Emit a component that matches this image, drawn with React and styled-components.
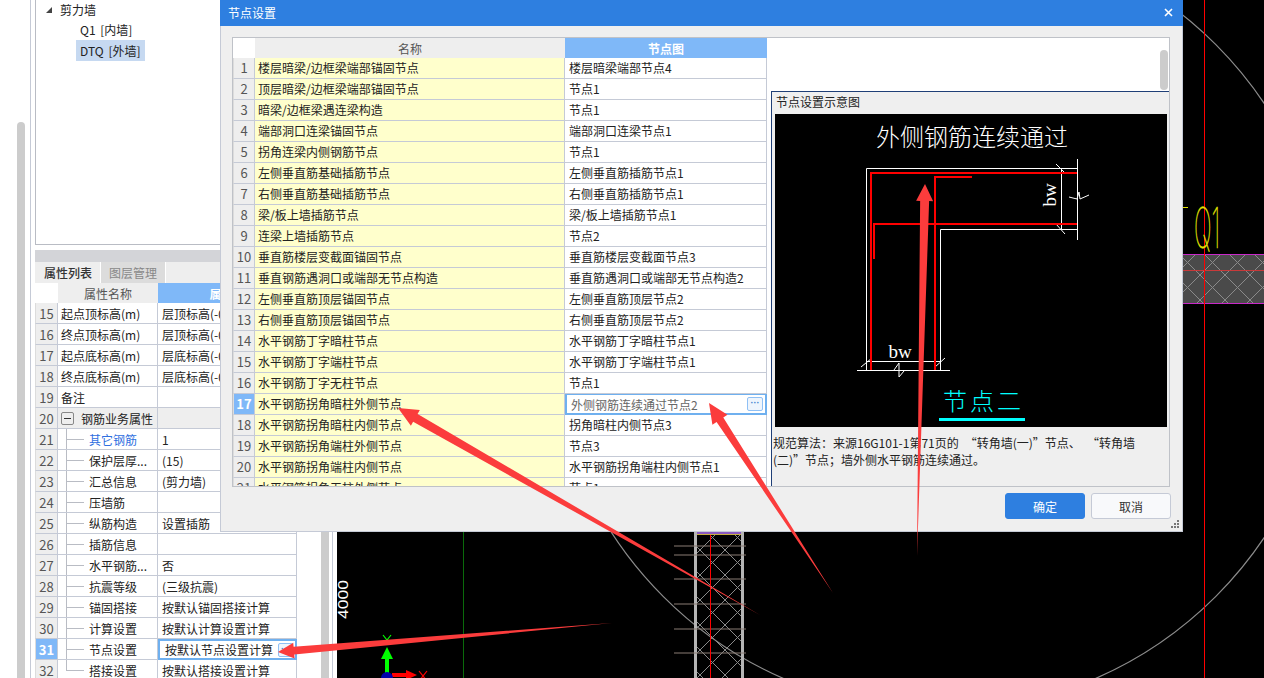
import React from "react";
import styled, { createGlobalStyle } from "styled-components";

const GlobalStyle = createGlobalStyle`
  html, body {
    margin: 0;
    padding: 0;
    overflow: hidden;
    background: #000;
  }
  #root {
    width: 1264px;
    height: 678px;
  }
`;

const FONT = `"Noto Sans CJK SC", "Liberation Sans", sans-serif`;
const LINE = "#c5cad6";

const Page = styled.div`
  position: relative;
  display: flex;
  width: 1264px;
  height: 678px;
  overflow: hidden;
  font-family: ${FONT};
  font-size: 12px;
  color: #222;
`;

/* left side */
const Sidebar = styled.div`
  display: flex;
  flex: 0 0 337px;
  background: #fff;
`;

const OuterRail = styled.div`
  flex: 0 0 31px;
  padding: 122px 0 0 17px;
  box-sizing: border-box;
  border-right: 1px solid ${LINE};
`;

const Thumb = styled.div`
  width: 8px;
  height: 100%;
  background: #ccc;
  border-radius: 4px 4px 0 0;
`;

const Panel = styled.div`
  flex: 0 0 262px;
  margin-left: 4px;
  display: flex;
  flex-direction: column;
`;

const TreeBox = styled.div`
  height: 245px;
  box-sizing: border-box;
  border-left: 1px solid #b9bcc4;
  border-bottom: 1px solid #b9bcc4;
  margin-bottom: 5px;
  flex: none;
`;

const TreeRow = styled.div`
  display: flex;
  align-items: center;
  height: ${(p) => p.$h || 21}px;
  padding-left: ${(p) => p.$indent}px;
`;

const Caret = styled.span`
  width: 0;
  height: 0;
  margin-right: 4px;
  border-style: solid;
  border-width: 0 0 6px 6px;
  border-color: transparent transparent #444 transparent;
`;

const TreeLabel = styled.span`
  padding: 0 4px;
  line-height: 21px;
  word-spacing: 2px;
  background: ${(p) => (p.$active ? "#c6d9f1" : "transparent")};
`;

const GreyBar = styled.div`
  flex: none;
  height: 12px;
  background: #d3d4d8;
`;

const Tabs = styled.div`
  flex: none;
  display: flex;
  height: 21px;
  padding-left: 1px;
  background: #eee;
`;

const Tab = styled.div`
  width: 65px;
  display: flex;
  align-items: center;
  justify-content: center;
  font-weight: ${(p) => (p.$active ? 500 : 400)};
  background: ${(p) => (p.$active ? "#eee" : "#dcdcdc")};
  color: ${(p) => (p.$active ? "#333" : "#888")};
  border-right: 1px solid #fff;
  box-sizing: border-box;
`;

const PropHead = styled.div`
  flex: none;
  display: grid;
  grid-template-columns: 23px 100px 139px;
  height: 20px;
`;

const HeadCell = styled.div`
  display: flex;
  align-items: center;
  justify-content: center;
  overflow: hidden;
  white-space: nowrap;
  font-weight: ${(p) => (p.$active ? 700 : 400)};
  background: ${(p) => (p.$blank ? "#fff" : p.$active ? "#7fb8f8" : "#eee")};
  color: ${(p) => (p.$active ? "#fff" : "#555")};
`;

const PropRow = styled.div`
  flex: none;
  display: grid;
  grid-template-columns: 23px 100px 139px;
  height: 21px;
`;

const Cell = styled.div`
  position: relative;
  display: flex;
  align-items: center;
  box-sizing: border-box;
  white-space: nowrap;
  overflow: hidden;
  border-right: 1px solid ${LINE};
  border-bottom: 1px solid ${LINE};
`;

const IndexCell = styled(Cell)`
  justify-content: center;
  font-size: 13px;
  color: ${(p) => (p.$active ? "#fff" : "#555")};
  font-weight: ${(p) => (p.$active ? 700 : 400)};
  background: ${(p) => (p.$active ? "#7fb8f8" : "#eee")};
  border-left: 1px solid #dcdcdc;
`;

const NameCell = styled(Cell)`
  padding-left: ${(p) => (p.$child ? 31 : 3)}px;
  background: ${(p) => (p.$group ? "#eee" : "#fff")};
  color: ${(p) => (p.$link ? "#2f6fe0" : "#222")};
  &::before {
    content: ${(p) => (p.$child ? '""' : "none")};
    position: absolute;
    left: 8px;
    top: -1px;
    bottom: ${(p) => (p.$last ? "10px" : "-1px")};
    border-left: 1px solid #b9bcc4;
  }
  &::after {
    content: ${(p) => (p.$child ? '""' : "none")};
    position: absolute;
    left: 8px;
    top: 10px;
    width: 18px;
    border-top: 1px solid #b9bcc4;
  }
`;

const ValueCell = styled(Cell)`
  padding-left: 4px;
  background: ${(p) => (p.$group ? "#eee" : "#fff")};
`;

const EditingProp = styled.div`
  position: relative;
  display: flex;
  align-items: center;
  justify-content: space-between;
  box-sizing: border-box;
  padding: 0 2px 0 5px;
  white-space: nowrap;
  overflow: hidden;
  border: 2px solid #6fb0ef;
`;

const Expander = styled.span`
  flex: none;
  width: 13px;
  height: 13px;
  margin-right: 7px;
  box-sizing: border-box;
  border: 1px solid #888;
  border-radius: 2px;
  display: flex;
  align-items: center;
  justify-content: center;
  &::before {
    content: "";
    width: 7px;
    border-top: 1px solid #333;
  }
`;

const RightRail = styled.div`
  flex: 1;
  display: flex;
  align-items: stretch;
  padding-left: 24px;
`;

const RailThumb = styled.div`
  flex: 0 0 8px;
  background: #ccc;
`;

const RailLine = styled.div`
  flex: 0 0 1px;
  margin-left: 3px;
  background: ${LINE};
`;

/* cad canvas */
const Canvas = styled.svg`
  flex: 1;
  display: block;
  height: 678px;
  background: #000;
`;

/* dialog window */
const Dialog = styled.div`
  position: absolute;
  left: 220px;
  top: 0;
  width: 963px;
  height: 532px;
  display: flex;
  flex-direction: column;
  box-sizing: border-box;
  background: #efefef;
  border: 1px solid ${LINE};
  border-top: 0;
`;

const TitleBar = styled.div`
  flex: none;
  height: 26px;
  margin: 0 -1px;
  padding: 0 8px 2px;
  box-sizing: border-box;
  display: flex;
  align-items: center;
  justify-content: space-between;
  background: #2e7fe0;
  color: #fff;
`;

const CloseIcon = styled.svg`
  width: 9px;
  height: 9px;
  margin-right: 2px;
`;

const Grid = styled.div`
  position: relative;
  flex: none;
  margin: 11px 0 0 11px;
  width: 938px;
  height: 450px;
  box-sizing: border-box;
  border: 1px solid #bfc2c8;
  background: #fff;
  overflow: hidden;
`;

const GridHead = styled.div`
  display: grid;
  grid-template-columns: 22px 310px 202px;
  height: 20px;
`;

const GridRow = styled.div`
  display: grid;
  grid-template-columns: 22px 310px 202px;
  height: 21px;
`;

const GridIndex = styled(IndexCell)`
  padding-bottom: 1px;
`;

const GridName = styled(Cell)`
  padding: 0 0 1px 3px;
  background: #ffffcc;
`;

const GridValue = styled(Cell)`
  padding: 0 0 1px 4px;
  background: #fff;
`;

const EditingValue = styled.div`
  display: flex;
  align-items: center;
  justify-content: space-between;
  box-sizing: border-box;
  margin-top: -1px;
  height: 22px;
  padding: 0 2px 0 4px;
  color: #666;
  border: 2px solid #6fb0ef;
  background: #fff;
`;

const DotsButton = styled.span`
  flex: none;
  width: ${(p) => p.$w}px;
  height: 14px;
  box-sizing: border-box;
  border: 1px solid #8fc0f5;
  border-radius: 2px;
  background: #eef5fd;
  color: #3f7fd0;
  font: 700 9px/10px "Liberation Sans", sans-serif;
  text-align: center;
`;

const ScrollThumb = styled.div`
  position: absolute;
  right: 1px;
  top: 12px;
  width: 8px;
  height: 40px;
  background: #ccc;
  border-radius: 4px;
`;

const PreviewPanel = styled.div`
  position: absolute;
  left: 538px;
  top: 53px;
  width: 399px;
  height: 396px;
  box-sizing: border-box;
  display: flex;
  flex-direction: column;
  padding: 0 3px;
  background: #efefef;
  border: 1px solid #1f3f77;
`;

const PreviewTitle = styled.div`
  flex: none;
  height: 22px;
  box-sizing: border-box;
  display: flex;
  align-items: center;
  padding: 0 0 4px 1px;
`;

const Diagram = styled.svg`
  flex: none;
  display: block;
  width: 392px;
  height: 313px;
  background: #000;
`;

const RuleText = styled.div`
  margin: 7px 0 0 -2px;
  line-height: 17px;
  white-space: nowrap;
  color: #222;
`;

const Footer = styled.div`
  flex: 1;
  display: flex;
  justify-content: flex-end;
  align-items: flex-start;
  gap: 6px;
  padding: 6px 11px 0 0;
`;

const Button = styled.div`
  width: 80px;
  height: 26px;
  box-sizing: border-box;
  display: flex;
  align-items: center;
  justify-content: center;
  border-radius: 3px;
  background: ${(p) => (p.$primary ? "#2e7fe0" : "#f8f9fb")};
  color: ${(p) => (p.$primary ? "#fff" : "#333")};
  border: 1px solid ${(p) => (p.$primary ? "#2e7fe0" : LINE)};
`;

const Grip = styled.svg`
  position: absolute;
  right: 2px;
  bottom: 2px;
  width: 9px;
  height: 9px;
`;

const Overlay = styled.svg`
  position: absolute;
  left: 0;
  top: 0;
  width: 1264px;
  height: 678px;
  pointer-events: none;
`;

const props = [
  { n: 15, name: "起点顶标高(m)", value: "层顶标高(-0" },
  { n: 16, name: "终点顶标高(m)", value: "层顶标高(-0" },
  { n: 17, name: "起点底标高(m)", value: "层底标高(-0" },
  { n: 18, name: "终点底标高(m)", value: "层底标高(-0" },
  { n: 19, name: "备注", value: "" },
  { n: 20, name: "钢筋业务属性", value: "", group: true },
  { n: 21, name: "其它钢筋", value: "1", child: true, link: true },
  { n: 22, name: "保护层厚...", value: "(15)", child: true },
  { n: 23, name: "汇总信息", value: "(剪力墙)", child: true },
  { n: 24, name: "压墙筋", value: "", child: true },
  { n: 25, name: "纵筋构造", value: "设置插筋", child: true },
  { n: 26, name: "插筋信息", value: "", child: true },
  { n: 27, name: "水平钢筋...", value: "否", child: true },
  { n: 28, name: "抗震等级", value: "(三级抗震)", child: true },
  { n: 29, name: "锚固搭接", value: "按默认锚固搭接计算", child: true },
  { n: 30, name: "计算设置", value: "按默认计算设置计算", child: true },
  { n: 31, name: "节点设置", value: "按默认节点设置计算", child: true, editing: true },
  { n: 32, name: "搭接设置", value: "按默认搭接设置计算", child: true, last: true },
];

const nodes = [
  ["楼层暗梁/边框梁端部锚固节点", "楼层暗梁端部节点4"],
  ["顶层暗梁/边框梁端部锚固节点", "节点1"],
  ["暗梁/边框梁遇连梁构造", "节点1"],
  ["端部洞口连梁锚固节点", "端部洞口连梁节点1"],
  ["拐角连梁内侧钢筋节点", "节点1"],
  ["左侧垂直筋基础插筋节点", "左侧垂直筋插筋节点1"],
  ["右侧垂直筋基础插筋节点", "右侧垂直筋插筋节点1"],
  ["梁/板上墙插筋节点", "梁/板上墙插筋节点1"],
  ["连梁上墙插筋节点", "节点2"],
  ["垂直筋楼层变截面锚固节点", "垂直筋楼层变截面节点3"],
  ["垂直钢筋遇洞口或端部无节点构造", "垂直筋遇洞口或端部无节点构造2"],
  ["左侧垂直筋顶层锚固节点", "左侧垂直筋顶层节点2"],
  ["右侧垂直筋顶层锚固节点", "右侧垂直筋顶层节点2"],
  ["水平钢筋丁字暗柱节点", "水平钢筋丁字暗柱节点1"],
  ["水平钢筋丁字端柱节点", "水平钢筋丁字端柱节点1"],
  ["水平钢筋丁字无柱节点", "节点1"],
  ["水平钢筋拐角暗柱外侧节点", "外侧钢筋连续通过节点2"],
  ["水平钢筋拐角暗柱内侧节点", "拐角暗柱内侧节点3"],
  ["水平钢筋拐角端柱外侧节点", "节点3"],
  ["水平钢筋拐角端柱内侧节点", "水平钢筋拐角端柱内侧节点1"],
  ["水平钢筋拐角无柱外侧节点", "节点1"],
];

// tapered annotation arrow, thin at the tail and widest behind the head
function arrowPoints([tx, ty], [hx, hy], headLen, headW, shaftW) {
  const len = Math.hypot(hx - tx, hy - ty);
  const ux = (hx - tx) / len;
  const uy = (hy - ty) / len;
  const bx = hx - ux * headLen;
  const by = hy - uy * headLen;
  const side = (d) => `${bx - uy * d},${by + ux * d}`;
  return [
    `${tx},${ty}`,
    side(shaftW / 2),
    side(headW / 2),
    `${hx},${hy}`,
    side(-headW / 2),
    side(-shaftW / 2),
  ].join(" ");
}

const arrows = [
  { tail: [760, 615], tip: [398, 408], head: 20, w: 18, shaft: 9 },
  { tail: [833, 593], tip: [709, 403], head: 20, w: 18, shaft: 8 },
  { tail: [917, 556], tip: [925, 184], head: 17, w: 17, shaft: 9 },
  { tail: [612, 623], tip: [278, 652], head: 16, w: 16, shaft: 8 },
];

function CadCanvas() {
  const levels = [546, 555, 579, 604, 629, 653];
  return (
    <Canvas viewBox="337 0 927 678">
      <defs>
        <pattern id="hatch" width="25" height="25" patternUnits="userSpaceOnUse">
          <path d="M0 0L25 25M25 0L0 25" stroke="#8a8a8a" strokeWidth="1" fill="none" />
        </pattern>
      </defs>
      <circle cx="939.5" cy="320.5" r="390.5" fill="none" stroke="#8c8c8c" strokeWidth="1.2" />
      <line x1="463.5" y1="0" x2="463.5" y2="678" stroke="#0a6a0a" />

      <rect x="694" y="531" width="50" height="147" fill="url(#hatch)" />
      <rect x="695.5" y="530" width="47" height="160" fill="none" stroke="#b5b5b5" strokeWidth="3" />
      <rect x="697" y="532" width="44" height="2" fill="#8a5ac0" />
      <rect x="697" y="534" width="44" height="1" fill="#c8b040" />
      {levels.map((y) => (
        <line key={y} x1="674" y1={y} x2="746" y2={y} stroke="#8a7c74" />
      ))}
      <line x1="710.5" y1="535" x2="710.5" y2="678" stroke="#f00" />

      <rect x="1183" y="254" width="81" height="50" fill="#4a4a4a" />
      <rect x="1183" y="254" width="81" height="50" fill="url(#hatch)" />
      <path d="M1183 254.5H1264M1183 303.5H1264" stroke="#c828c8" strokeWidth="1.2" />
      <line x1="1183" y1="270.5" x2="1264" y2="270.5" stroke="#c83a3a" />
      <line x1="1204.5" y1="0" x2="1204.5" y2="678" stroke="#f00" />

      <line x1="1183" y1="207.5" x2="1188" y2="207.5" stroke="#e6e600" />
      <text
        transform="translate(1194 248) scale(0.42 1)"
        fontFamily="Inter, Liberation Sans, sans-serif"
        fontWeight="100"
        fontSize="56"
        fill="#e6e600"
        stroke="#e6e600"
        strokeWidth="0.6"
      >
        Q1
      </text>

      <text
        transform="translate(347.5 619) rotate(-90)"
        fontFamily="Liberation Sans, sans-serif"
        fontSize="14"
        fill="#fff"
        textLength="39"
        lengthAdjust="spacingAndGlyphs"
      >
        4000
      </text>

      <rect x="385" y="655" width="4" height="20" fill="#0f0" />
      <polygon points="387,647 381,659 393,659" fill="#0f0" />
      <path d="M383 635L387 640L391 635M387 640V645" stroke="#0f0" strokeWidth="1.2" fill="none" />
      <rect x="392" y="673" width="18" height="4" fill="#f00" />
      <polygon points="417,675 406,670 406,680" fill="#f00" />
      <path d="M419 671L427 681M427 671L419 681" stroke="#f00" strokeWidth="1.2" fill="none" />
      <circle cx="387" cy="678" r="6" fill="#00a" />
    </Canvas>
  );
}

function NodeDiagram() {
  return (
    <Diagram viewBox="0 0 392 313">
      <text x="197" y="32" textAnchor="middle" fill="#fff" fontFamily={FONT} fontSize="24" fontWeight="300">
        外侧钢筋连续通过
      </text>
      <g fill="none" stroke="#fff" strokeWidth="1">
        <path d="M302.5 54.5H91.5V256.5" />
        <path d="M302.5 115.5H165.5V256.5" />
        <path d="M302.5 45V126M286.5 54V116" />
        <path d="M281 50L290 59M281 110L290 120" />
        <path d="M294 83L302 85L304 78L305 85L314 81" />
        <path d="M91 247.5H165M82 256.5H175" />
        <path d="M86 253L97 244M160 253L170 244" />
        <path d="M119 256L124 249L124 263L129 257" />
      </g>
      <g fill="none" stroke="#f00">
        <path d="M302 59H96V256" strokeWidth="2" />
        <path d="M197 63H160V256" strokeWidth="2" />
        <path d="M302 110H99V145" strokeWidth="2" />
      </g>
      <text x="125" y="244" textAnchor="middle" fill="#fff" fontFamily="Liberation Serif, serif" fontSize="19">
        bw
      </text>
      <text
        transform="translate(281 81) rotate(-90)"
        textAnchor="middle"
        fill="#fff"
        fontFamily="Liberation Serif, serif"
        fontSize="19"
      >
        bw
      </text>
      <text x="168" y="296" fill="#00ffff" fontFamily={FONT} fontSize="24" letterSpacing="3" fontWeight="300">
        节点二
      </text>
      <rect x="164" y="304" width="86" height="3" fill="#00ffff" />
    </Diagram>
  );
}

function PropertyPanel() {
  return (
    <Panel>
      <TreeBox>
        <TreeRow $indent={10} $h={19}>
          <Caret />
          <TreeLabel>剪力墙</TreeLabel>
        </TreeRow>
        <TreeRow $indent={40}>
          <TreeLabel>Q1 [内墙]</TreeLabel>
        </TreeRow>
        <TreeRow $indent={40}>
          <TreeLabel $active>DTQ [外墙]</TreeLabel>
        </TreeRow>
      </TreeBox>
      <GreyBar />
      <Tabs>
        <Tab $active>属性列表</Tab>
        <Tab>图层管理</Tab>
      </Tabs>
      <PropHead>
        <HeadCell $blank />
        <HeadCell>属性名称</HeadCell>
        <HeadCell $active>属性值</HeadCell>
      </PropHead>
      {props.map((p) => (
        <PropRow key={p.n}>
          <IndexCell $active={p.editing}>{p.n}</IndexCell>
          <NameCell $child={p.child} $last={p.last} $group={p.group} $link={p.link}>
            {p.group && <Expander />}
            {p.name}
          </NameCell>
          {p.editing ? (
            <EditingProp>
              {p.value}
              <DotsButton $w={15}>···</DotsButton>
            </EditingProp>
          ) : (
            <ValueCell $group={p.group}>{p.value}</ValueCell>
          )}
        </PropRow>
      ))}
    </Panel>
  );
}

function NodeDialog() {
  return (
    <Dialog>
      <TitleBar>
        节点设置
        <CloseIcon viewBox="0 0 9 9">
          <path d="M1 1L8 8M8 1L1 8" stroke="#fff" strokeWidth="1.6" />
        </CloseIcon>
      </TitleBar>
      <Grid>
        <GridHead>
          <HeadCell $blank />
          <HeadCell>名称</HeadCell>
          <HeadCell $active>节点图</HeadCell>
        </GridHead>
        {nodes.map(([name, value], i) => (
          <GridRow key={name}>
            <GridIndex $active={i === 16}>{i + 1}</GridIndex>
            <GridName>{name}</GridName>
            {i === 16 ? (
              <EditingValue>
                {value}
                <DotsButton $w={16}>···</DotsButton>
              </EditingValue>
            ) : (
              <GridValue>{value}</GridValue>
            )}
          </GridRow>
        ))}
        <ScrollThumb />
        <PreviewPanel>
          <PreviewTitle>节点设置示意图</PreviewTitle>
          <NodeDiagram />
          <RuleText>
            规范算法：来源16G101-1第71页的{"\u2002"}“转角墙(一)”节点、{"\u2002"}“转角墙
            <br />
            (二)”节点；墙外侧水平钢筋连续通过。
          </RuleText>
        </PreviewPanel>
      </Grid>
      <Footer>
        <Button $primary>确定</Button>
        <Button>取消</Button>
      </Footer>
      <Grip viewBox="0 0 9 9">
        <path d="M6 0h2v2H6zM3 3h2v2H3zM6 3h2v2H6zM0 6h2v2H0zM3 6h2v2H3zM6 6h2v2H6z" fill="#777" />
      </Grip>
    </Dialog>
  );
}

export default function App() {
  return (
    <Page>
      <GlobalStyle />
      <Sidebar>
        <OuterRail>
          <Thumb />
        </OuterRail>
        <PropertyPanel />
        <RightRail>
          <RailThumb />
          <RailLine />
        </RightRail>
      </Sidebar>
      <CadCanvas />
      <NodeDialog />
      <Overlay viewBox="0 0 1264 678">
        {arrows.map((a) => (
          <polygon
            key={a.tip.join()}
            points={arrowPoints(a.tail, a.tip, a.head, a.w, a.shaft)}
            fill="#fb3c3c"
          />
        ))}
      </Overlay>
    </Page>
  );
}
